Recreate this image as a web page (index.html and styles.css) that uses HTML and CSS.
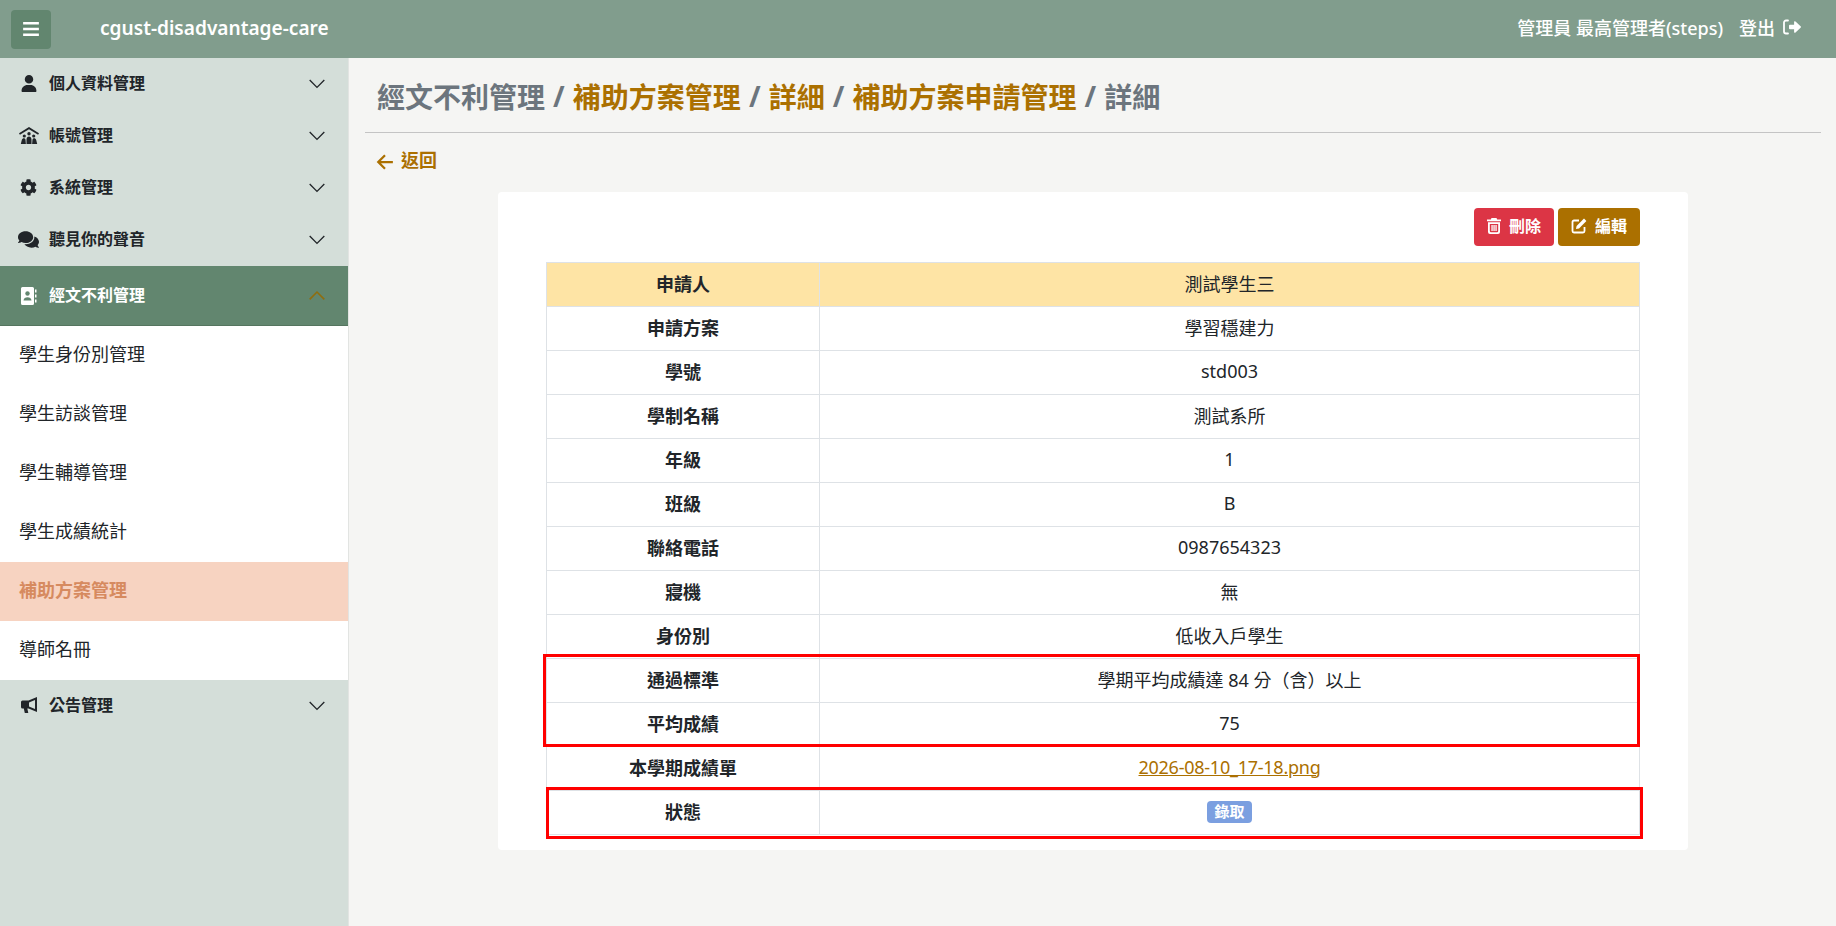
FILE: index.html
```html
<!DOCTYPE html>
<html lang="zh-Hant">
  <head>
    <meta charset="UTF-8" />
    <title>cgust-disadvantage-care</title>
    <link rel="stylesheet" href="styles.css">
  </head>
  <body>
    <!-- Top bar -->
    <header class="topbar">
      <div class="topbar-left">
        <button class="menu-btn" type="button">
          <svg class="icon" viewBox="0 0 16 16" width="18" height="18"><path d="M1 1.800h14v2.200H1zM1 6.900h14v2.200H1zM1 12h14v2.200H1z" fill="#fff"/></svg>
        </button>
        <span class="brand">cgust-disadvantage-care</span>
      </div>
      <div class="topbar-right">
        <span>管理員 最高管理者(steps)</span>
        <a class="logout">登出
          <svg class="icon" viewBox="0 0 18 16" width="18" height="16"><path fill="#fff" d="M17.600 8.700a1 1 0 0 0 0-1.400L12.500 2.500a.8.800 0 0 0-1.400.6V5.800H7a1 1 0 0 0-1 1v2.400a1 1 0 0 0 1 1h4.100v2.700a.8.800 0 0 0 1.400.6z"/><path fill="none" stroke="#fff" stroke-width="1.800" stroke-linecap="round" d="M5 1.500H3A2 2 0 0 0 1 3.500v9a2 2 0 0 0 2 2h2"/></svg>
        </a>
      </div>
    </header>

    <div class="layout">
      <!-- Sidebar -->
      <nav class="sidebar">
        <div class="nav-group">
          <span class="nav-icon"><svg viewBox="0 0 448 512" width="16" height="17"><path d="M224 256A128 128 0 1 0 224 0a128 128 0 1 0 0 256zm-45.700 48C79.800 304 0 383.800 0 482.300C0 498.700 13.300 512 29.700 512H418.300c16.400 0 29.700-13.300 29.700-29.700C448 383.800 368.200 304 269.700 304H178.300z"/></svg></span>
          <span class="nav-label">個人資料管理</span>
          <svg class="chevron" viewBox="0 0 16 16" width="18" height="18"><path d="M1.500 4.500 8 11l6.500-6.500"/></svg>
        </div>
        <div class="nav-group">
          <span class="nav-icon"><svg viewBox="0 0 20 17" width="20" height="17"><path d="M10 0 0 6.300l.9 1.400L10 2.200l9.100 5.500.9-1.400z"/><circle cx="10" cy="6.800" r="1.700"/><circle cx="5.300" cy="9" r="1.600"/><circle cx="14.700" cy="9" r="1.600"/><path d="M7.500 17v-4.300c0-4.300 5-4.300 5 0V17zM1.800 17l1-4c.6-2.300 3-2.300 3.700-.6l.4 4.600zM18.200 17l-1-4c-.6-2.300-3-2.300-3.700-.6l-.4 4.600z"/></svg></span>
          <span class="nav-label">帳號管理</span>
          <svg class="chevron" viewBox="0 0 16 16" width="18" height="18"><path d="M1.500 4.500 8 11l6.500-6.500"/></svg>
        </div>
        <div class="nav-group">
          <span class="nav-icon"><svg viewBox="0 0 512 512" width="17" height="17"><path d="M487.400 315.700l-42.600-24.600c4.300-23.200 4.300-47 0-70.200l42.600-24.600c4.900-2.800 7.100-8.600 5.500-14-11.100-35.600-30-67.800-54.700-94.600-3.800-4.100-10-5.100-14.800-2.300L380.800 110c-17.900-15.400-38.500-27.300-60.800-35.100V25.800c0-5.600-3.900-10.500-9.400-11.700-36.700-8.200-74.300-7.800-109.200 0-5.500 1.200-9.400 6.100-9.400 11.700V75c-22.200 7.900-42.800 19.800-60.800 35.100L88.700 85.500c-4.900-2.800-11-1.900-14.800 2.300-24.700 26.700-43.600 58.900-54.700 94.600-1.700 5.400.6 11.200 5.500 14L67.300 221c-4.300 23.200-4.300 47 0 70.200l-42.600 24.600c-4.900 2.800-7.100 8.600-5.500 14 11.100 35.600 30 67.800 54.700 94.600 3.800 4.100 10 5.100 14.800 2.300l42.600-24.600c17.900 15.400 38.500 27.300 60.800 35.100v49.200c0 5.600 3.900 10.500 9.400 11.700 36.700 8.200 74.300 7.800 109.200 0 5.500-1.200 9.400-6.100 9.400-11.700v-49.200c22.200-7.900 42.800-19.800 60.800-35.100l42.600 24.600c4.900 2.800 11 1.900 14.800-2.300 24.700-26.700 43.600-58.900 54.700-94.600 1.500-5.500-.7-11.300-5.600-14.100zM256 336c-44.100 0-80-35.900-80-80s35.900-80 80-80 80 35.900 80 80-35.900 80-80 80z"/></svg></span>
          <span class="nav-label">系統管理</span>
          <svg class="chevron" viewBox="0 0 16 16" width="18" height="18"><path d="M1.500 4.500 8 11l6.500-6.500"/></svg>
        </div>
        <div class="nav-group">
          <span class="nav-icon"><svg viewBox="0 0 576 512" width="21" height="19"><path d="M416 192c0-88.400-93.100-160-208-160S0 103.600 0 192c0 34.300 14.100 65.900 38 92-13.400 30.200-35.500 54.200-35.800 54.500-2.200 2.300-2.800 5.700-1.500 8.700S4.800 352 8 352c36.600 0 66.900-12.300 88.700-25 32.200 15.700 70.300 25 111.300 25 114.900 0 208-71.600 208-160zm122 220c23.900-26 38-57.700 38-92 0-66.900-53.500-124.200-129.300-148.100.9 6.600 1.300 13.300 1.300 20.100 0 105.900-107.700 192-240 192-10.800 0-21.300-.8-31.700-1.900C207.800 439.600 281.800 480 368 480c41 0 79.100-9.200 111.300-25 21.800 12.700 52.100 25 88.700 25 3.200 0 6.100-1.900 7.300-4.800 1.300-2.900.7-6.300-1.500-8.700-.3-.3-22.400-24.200-35.800-54.500z"/></svg></span>
          <span class="nav-label">聽見你的聲音</span>
          <svg class="chevron" viewBox="0 0 16 16" width="18" height="18"><path d="M1.500 4.500 8 11l6.500-6.500"/></svg>
        </div>
        <div class="nav-group open">
          <span class="nav-icon"><svg viewBox="0 0 16 18" width="16" height="18"><path fill="#fff" d="M1.500 0h10A1.500 1.500 0 0 1 13 1.500v15a1.500 1.500 0 0 1-1.500 1.500h-10A1.500 1.500 0 0 1 0 16.500v-15A1.500 1.500 0 0 1 1.500 0z"/><path fill="#fff" d="M14 2.500h1.500v3H14zM14 7.500h1.500v3H14zM14 12.500h1.500v3H14z"/><circle cx="6.500" cy="6.500" r="2.200" fill="#62866f"/><path fill="#62866f" d="M2.500 13.500c0-4.500 8-4.500 8 0z"/></svg></span>
          <span class="nav-label">經文不利管理</span>
          <svg class="chevron" viewBox="0 0 16 16" width="18" height="18"><path d="M1.500 11 8 4.500l6.500 6.500"/></svg>
        </div>
        <ul class="subnav">
          <li>學生身份別管理</li>
          <li>學生訪談管理</li>
          <li>學生輔導管理</li>
          <li>學生成績統計</li>
          <li class="current">補助方案管理</li>
          <li>導師名冊</li>
        </ul>
        <div class="nav-group">
          <span class="nav-icon"><svg viewBox="0 0 16 17" width="16" height="17"><path fill-rule="evenodd" d="M16 0v15L7.500 11.500H6.300l1 4.500H3.800l-1-4.500H1.500A1.500 1.500 0 0 1 0 10V5a1.500 1.500 0 0 1 1.500-1.500h6zM14 3 8 5.500v4l6 2.500z"/></svg></span>
          <span class="nav-label">公告管理</span>
          <svg class="chevron" viewBox="0 0 16 16" width="18" height="18"><path d="M1.500 4.500 8 11l6.500-6.500"/></svg>
        </div>
      </nav>

      <!-- Main content -->
      <main class="content">
        <h1 class="crumbs">
          經文不利管理 <span class="sep">/</span>
          <a>補助方案管理</a> <span class="sep">/</span>
          <a>詳細</a> <span class="sep">/</span>
          <a>補助方案申請管理</a> <span class="sep">/</span>
          詳細
        </h1>
        <a class="back">
          <svg viewBox="0 0 16 16" width="18" height="18"><path d="M15 8H2M8 2 2 8l6 6"/></svg>
          <span>返回</span>
        </a>

        <section class="card">
          <div class="actions">
            <button class="btn btn-delete" type="button">
              <svg viewBox="0 0 14 16" width="14" height="16"><path fill="#fff" fill-rule="evenodd" d="M4.500 0h5l.7 1.500H14V3.300H0V1.500h3.800zM1 4.300h12V14a2 2 0 0 1-2 2H3a2 2 0 0 1-2-2zm1.800 1.700V13a1.200 1.200 0 0 0 1.200 1.200h6A1.200 1.200 0 0 0 11.200 13V6zM4.400 7h1.300v6H4.400zm2 0h1.300v6H6.400zm2 0h1.300v6H8.400z"/></svg>
              <span>刪除</span>
            </button>
            <button class="btn btn-edit" type="button">
              <svg viewBox="0 0 16 16" width="16" height="16"><path fill="none" stroke="#fff" stroke-width="1.800" d="M8 2.500H3A1.500 1.500 0 0 0 1.500 4v9A1.500 1.500 0 0 0 3 14.500h9a1.500 1.500 0 0 0 1.500-1.500V9"/><path fill="#fff" d="M13 .6l2.400 2.400L8 10.500l-3 .6.600-3z"/></svg>
              <span>編輯</span>
            </button>
          </div>

          <div class="table-wrap">
            <table class="detail">
              <tr class="head"><th>申請人</th><td>測試學生三</td></tr>
              <tr><th>申請方案</th><td>學習穩建力</td></tr>
              <tr><th>學號</th><td>std003</td></tr>
              <tr><th>學制名稱</th><td>測試系所</td></tr>
              <tr><th>年級</th><td>1</td></tr>
              <tr><th>班級</th><td>B</td></tr>
              <tr><th>聯絡電話</th><td>0987654323</td></tr>
              <tr><th>寢機</th><td>無</td></tr>
              <tr><th>身份別</th><td>低收入戶學生</td></tr>
              <tr><th>通過標準</th><td>學期平均成績達 84 分（含）以上</td></tr>
              <tr><th>平均成績</th><td>75</td></tr>
              <tr><th>本學期成績單</th><td><a class="file-link">2026-08-10_17-18.png</a></td></tr>
              <tr><th>狀態</th><td><span class="badge">錄取</span></td></tr>
            </table>
            <!-- Red annotation boxes drawn over the table -->
            <div class="mark mark-a"></div>
            <div class="mark mark-b"></div>
          </div>
        </section>
      </main>
    </div>
  </body>
</html>
```

FILE: styles.css
```css
* {
  box-sizing: border-box;
}

body {
  margin: 0;
  height: 926px;
  overflow: hidden;
  background-color: #f5f5f3;
  color: #212529;
  font-family: "Noto Sans", "Noto Sans CJK TC", sans-serif;
  font-size: 18px;
}

/* Top bar */
.topbar {
  height: 58px;
  background-color: #819d8d;
  color: #fff;
  display: flex;
  align-items: center;
  justify-content: space-between;
  padding: 0 35px 0 11px;
}

.topbar-left,
.topbar-right,
.logout {
  display: flex;
  align-items: center;
}

.menu-btn {
  width: 40px;
  height: 39px;
  border: none;
  border-radius: 4px;
  background-color: #62866f;
  display: flex;
  align-items: center;
  justify-content: center;
  padding: 0;
}

.brand {
  margin-left: 49px;
  padding-bottom: 2px;
  font-size: 19.100px;
  font-weight: 600;
}

.topbar-right {
  font-size: 18px;
  font-weight: 500;
  gap: 16px;
  padding-bottom: 4px;
}

.logout {
  gap: 8px;
}

/* Sidebar */
.layout {
  display: flex;
  height: 868px;
}

.sidebar {
  width: 349px;
  flex-shrink: 0;
  background-color: #d4ded9;
  border-right: 1px solid #e2e4e2;
}

.nav-group {
  height: 52px;
  display: flex;
  align-items: center;
  padding: 0 22px 0 18px;
  font-size: 16px;
  font-weight: 700;
  border-bottom: 1px solid #d4ded9;
}

.nav-icon {
  width: 21px;
  display: flex;
  justify-content: center;
  margin-right: 10px;
}

.nav-icon svg {
  fill: #212529;
}

.nav-label {
  flex: 1;
  padding-bottom: 4px;
}

.chevron {
  fill: none;
  stroke: #212529;
  stroke-width: 1.200;
}

.nav-group.open {
  height: 60px;
  background-color: #62866f;
  color: #fff;
  border-bottom: 1px solid #55755f;
}

.nav-group.open .chevron {
  stroke: #8f6d0e;
  stroke-width: 1.400;
}

.subnav {
  list-style: none;
  margin: 0;
  padding: 0;
  background-color: #fff;
}

.subnav li {
  height: 59px;
  display: flex;
  align-items: center;
  padding: 0 0 6px 19px;
}

.subnav li.current {
  background-color: #f7d3c1;
  color: #d68a5f;
  font-weight: 700;
}

/* Main content */
.content {
  flex: 1;
  min-width: 0;
  padding: 0 15px 0 16px;
}

.crumbs {
  margin: 0;
  height: 75px;
  display: flex;
  align-items: center;
  gap: 8.100px;
  padding: 2px 12px 0;
  font-size: 28px;
  font-weight: 700;
  color: #6c757d;
  border-bottom: 1px solid #c4c4c4;
}

.crumbs a {
  color: #ab7000;
}

.back {
  display: flex;
  align-items: center;
  gap: 7px;
  margin: 16px 0 0 11px;
  height: 27px;
  color: #ab7000;
  font-weight: 700;
}

.back span {
  padding-bottom: 7px;
}

.back svg {
  fill: none;
  stroke: #ab7000;
  stroke-width: 2;
  margin-bottom: 2px;
}

.card {
  width: 1190px;
  margin: 16px 0 0 133px;
  padding: 16px 48px 15px;
  background-color: #fff;
  border-radius: 4px;
}

.actions {
  display: flex;
  justify-content: flex-end;
  gap: 4px;
  height: 38px;
  margin-bottom: 16px;
}

.btn {
  display: flex;
  align-items: center;
  gap: 8px;
  height: 38px;
  padding: 0 13px;
  border: none;
  border-radius: 4px;
  color: #fff;
  font-family: inherit;
  font-size: 16px;
  font-weight: 700;
}

.btn span {
  padding-bottom: 5px;
}

.btn svg {
  margin-bottom: 2px;
}

.btn-delete {
  background-color: #dc3545;
}

.btn-edit {
  background-color: #ab7000;
}

.table-wrap {
  position: relative;
}

.detail {
  width: 100%;
  border-collapse: collapse;
  table-layout: fixed;
}

.detail th,
.detail td {
  height: 44px;
  padding: 0 0 4px;
  text-align: center;
  border: 1px solid #dee2e6;
}

.detail th {
  width: 273px;
  font-weight: 700;
}

.detail .head th,
.detail .head td {
  background-color: #fee4a5;
}

.file-link {
  color: #ab7000;
  text-decoration: underline;
  letter-spacing: -0.250px;
}

.badge {
  display: inline-block;
  padding: 1px 7px 3px;
  border-radius: 4px;
  background-color: #7b9fe0;
  color: #fff;
  font-size: 15px;
  font-weight: 700;
  line-height: 18px;
  vertical-align: middle;
}

.mark {
  position: absolute;
  border: 3px solid #f00;
}

.mark-a {
  left: -3px;
  top: 392px;
  width: 1097px;
  height: 93px;
}

.mark-b {
  left: 0;
  top: 525px;
  width: 1097px;
  height: 52px;
}
```
